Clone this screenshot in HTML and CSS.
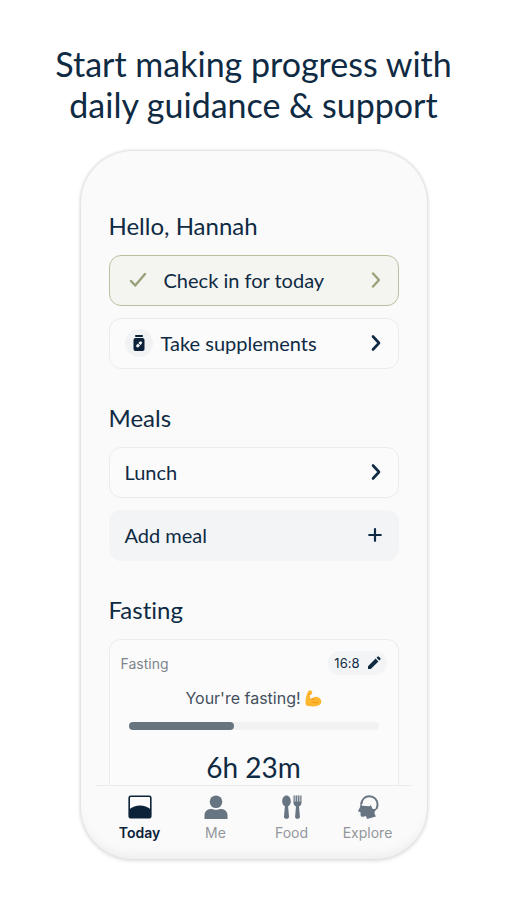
FILE: index.html
```html
<!DOCTYPE html>
<html lang="en">
<head>
<meta charset="utf-8">
<meta name="viewport" content="width=device-width, initial-scale=1">
<title>Today</title>
<link rel="stylesheet" href="styles.css">
</head>
<body>
<main class="page">
  <h1 class="headline">Start making progress with<br>daily guidance &amp; support</h1>
  <div class="phone">
    <div class="content">
      <section class="section">
        <h2>Hello, Hannah</h2>
        <button class="row row-done" type="button">
          <svg class="check" width="20" height="18" viewBox="0 0 20 18" fill="none" stroke="currentColor" stroke-width="2.5" stroke-linecap="round" stroke-linejoin="round"><path d="M3 10l4.200 4.500L17 3"/></svg>
          <span class="label">Check in for today</span>
          <svg width="12" height="18" viewBox="0 0 12 18" fill="none" stroke="currentColor" stroke-width="2.400" stroke-linecap="round" stroke-linejoin="round"><path d="M3 2.500l6 6.500-6 6.500"/></svg>
        </button>
        <button class="row" type="button">
          <span class="badge"><svg width="12" height="18" viewBox="0 0 12 18"><path d="M2.200 1h7.600v2H2.200z" fill="#0b2239"/><rect x="0.500" y="4" width="11" height="13" rx="2" fill="#0b2239"/><g fill="none" stroke="#f3f4f5" stroke-width="3" stroke-linecap="round"><path d="M4.600 12L7.600 8.800"/></g><path d="M4.800 9l2.800 2.800" stroke="#0b2239" stroke-width="1"/></svg></span>
          <span class="label">Take supplements</span>
          <svg width="12" height="18" viewBox="0 0 12 18" fill="none" stroke="currentColor" stroke-width="2.600" stroke-linecap="round" stroke-linejoin="round"><path d="M3 2.500l6 6.500-6 6.500"/></svg>
        </button>
      </section>
      <section class="section">
        <h2>Meals</h2>
        <button class="row" type="button">
          <span class="label">Lunch</span>
          <svg width="12" height="18" viewBox="0 0 12 18" fill="none" stroke="currentColor" stroke-width="2.600" stroke-linecap="round" stroke-linejoin="round"><path d="M3 2.500l6 6.500-6 6.500"/></svg>
        </button>
        <button class="row row-add" type="button">
          <span class="label">Add meal</span>
          <svg width="14" height="14" viewBox="0 0 14 14" fill="none" stroke="currentColor" stroke-width="2.200" stroke-linecap="round"><path d="M7 1.200v11.600M1.200 7h11.600"/></svg>
        </button>
      </section>
      <section class="section">
        <h2>Fasting</h2>
        <div class="card">
          <div class="card-head">
            <span>Fasting</span>
            <button class="plan" type="button">16:8
              <svg width="14" height="14" viewBox="0 0 14 14" fill="currentColor"><path d="M1 10.200L8.600 2.600l2.800 2.800L3.800 13H1zM9.500 1.700l1-1a1 1 0 0 1 1.400 0l1.400 1.400a1 1 0 0 1 0 1.400l-1 1z"/></svg>
            </button>
          </div>
          <p class="message">Your're fasting!
            <svg width="17" height="17" viewBox="0 0 17 17" role="img" aria-label="flexed biceps"><path d="M3.600.8C4.800.2 6.600.4 7.100 1.500c.4 1.100-.1 2.500-1.300 2.800l-1.100.2c0 2 .5 3.400 1.400 4.800 1.500-2 4-2.900 6.100-2.400 2.800.600 4.300 2.900 4.100 5.200-.3 3-3.700 4.300-8 4.300-3.300 0-5.800-.3-7.300-1.300C-.4 11.500 1.200 4.500 3.600.8z" fill="#fdb62f"/><path d="M6 9.300c1-.5 2.200-.4 3 .3M7.600 12c1.500 1 3.500 1 5 .1M4.300 4.700l1.600-.4" fill="none" stroke="#e4890f" stroke-width=".8" stroke-linecap="round"/></svg>
          </p>
          <div class="track" role="progressbar" aria-label="Fasting progress" aria-valuenow="42" aria-valuemin="0" aria-valuemax="100"><div class="fill" style="width:42%"></div></div>
          <p class="time">6h 23m</p>
        </div>
      </section>
    </div>
    <nav class="tabs">
      <a class="tab tab-active" href="#today">
        <svg width="24" height="24" viewBox="0 0 24 24"><rect x="1.200" y="1.200" width="21.600" height="21.600" rx="1.500" fill="none" stroke="currentColor" stroke-width="1.600"/><path d="M1 14.500c3.500-2.500 7-4 11-4s7.500 1.500 11 4V23H1z" fill="currentColor"/></svg>
        Today
      </a>
      <a class="tab" href="#me">
        <svg width="24" height="24" viewBox="0 0 24 24" fill="currentColor"><circle cx="12" cy="6.800" r="6.300"/><path d="M.500 24v-3.500c0-4 2.800-6.500 6.500-6.500 1.700 0 3 .8 5 .8s3.300-.8 5-.8c3.700 0 6.500 2.500 6.500 6.500V24z"/></svg>
        Me
      </a>
      <a class="tab" href="#food">
        <svg width="24" height="24" viewBox="0 0 24 24" fill="currentColor"><path d="M6.500.500c2.500 0 4.300 2.700 4.300 5.800 0 2.300-1 4.200-2.700 5l.9 10.200c.1 1.400-.9 2.300-2.500 2.300S3.900 22.900 4 21.500l.9-10.200c-1.700-.8-2.700-2.700-2.700-5C2.200 3.200 4 .500 6.500.500z"/><path d="M13.500.500h1.200v6h1.100v-6h1.100v6h1.200v-6h1.100v6h1.100v-6h1.200v7.300c0 1.900-1 3.100-2.500 3.600l.9 10.100c.1 1.400-.9 2.300-2.400 2.300s-2.500-.9-2.400-2.300L16 11.400c-1.500-.5-2.500-1.700-2.500-3.600z"/><path d="M14.700.500h5.600v6h-5.600z" opacity=".35"/></svg>
        Food
      </a>
      <a class="tab" href="#explore">
        <svg width="24" height="24" viewBox="0 0 24 24"><path d="M5.500 9C5.800 4.200 8.900 1.300 13.300 1.300c4.900 0 8.200 3.500 8.200 8.200 0 1.600-.5 3.200-1.200 4.500" fill="none" stroke="currentColor" stroke-width="2"/><path d="M4.500 7l1.700 3.800 7.600.5 1-1.300 1.700 3.800c1.500.5 3.200.300 4.800-.8-1.200 2-2.600 3.300-2.800 4.600-.1 1.200.5 2.200 1.400 3.800L11 24l-1-3c-1.500.4-3.700 1.200-4.700.5-1.100-.8-.6-2.800-.9-4.500l-1.600-.3c-.6-.2-.8-.8-.5-1.300l1.900-3.600z" fill="currentColor"/></svg>
        Explore
      </a>
    </nav>
  </div>
</main>
</body>
</html>
```
FILE: styles.css
```css
* {
  box-sizing: border-box;
}

body {
  margin: 0;
  background: #fff;
  color: #0f2a43;
  font-family: Lato, "Liberation Sans", sans-serif;
  font-variant-ligatures: none;
}

h1,
h2,
p {
  margin: 0;
  font-weight: 400;
}

svg {
  flex: none;
}

button {
  font: inherit;
  color: inherit;
  cursor: pointer;
}

.page {
  display: flex;
  flex-direction: column;
  align-items: center;
  padding: 43px 16px 38px;
}

.headline {
  margin-bottom: 26px;
  font-size: 34px;
  line-height: 41px;
  text-align: center;
}

.phone {
  width: 100%;
  max-width: 346px;
  padding: 59px 15px 16px;
  border-radius: 52px;
  background: #fafafa;
  box-shadow: 0 0 3px 1px #dcdcdc, 0 2px 5px 0 #e8e8e8, inset 0 -10px 12px -8px #e9e9e9;
}

.content {
  display: flex;
  flex-direction: column;
  gap: 33px;
  padding: 0 13px;
}

.section {
  display: flex;
  flex-direction: column;
  gap: 12px;
}

h2 {
  margin-bottom: 1px;
  font-size: 24px;
  line-height: 32px;
}

.row {
  display: flex;
  align-items: center;
  gap: 8px;
  width: 100%;
  height: 51px;
  padding: 0 16px 2px 15px;
  border: 1px solid #ececee;
  border-radius: 12px;
  background: #fbfbfb;
  font-size: 20px;
  line-height: 28px;
  text-align: left;
}

.label {
  flex: 1;
}

.row-done {
  gap: 16px;
  padding-left: 18px;
  border-color: #b9c0a0;
  background: #f4f5f1;
}

.row-done svg {
  color: #98a37a;
}

.row-add {
  border-color: #f2f4f6;
  background: #f2f4f6;
}

.badge {
  display: grid;
  place-items: center;
  width: 28px;
  height: 28px;
  border-radius: 50%;
  background: #f1f2f3;
}

.card {
  padding: 11px 11px 0;
  border: 1px solid #ececee;
  border-bottom: 0;
  border-radius: 12px 12px 0 0;
  background: #fbfbfb;
}

.card-head {
  display: flex;
  align-items: center;
  justify-content: space-between;
  color: #7d848c;
  font-family: Inter, "Liberation Sans", sans-serif;
  font-size: 14px;
}

.plan {
  display: flex;
  align-items: center;
  gap: 7px;
  height: 24px;
  padding: 0 6px;
  border: 0;
  border-radius: 12px;
  background: #f3f4f5;
  color: #0f2a43;
  font-size: 13px;
}

.message {
  display: flex;
  align-items: center;
  justify-content: center;
  gap: 4px;
  margin: 13px 0 14px;
  color: #44505d;
  font-family: Inter, "Liberation Sans", sans-serif;
  font-size: 16px;
  line-height: 20px;
}

.track {
  height: 8px;
  margin: 0 8px;
  border-radius: 4px;
  background: #f2f2f3;
}

.fill {
  height: 100%;
  border-radius: 4px;
  background: #667580;
}

.time {
  margin-top: 19px;
  font-size: 28px;
  line-height: 36px;
  text-align: center;
}

.tabs {
  display: flex;
  padding: 9px 6px 0;
  border-top: 1px solid #ececec;
}

.tab {
  display: flex;
  flex: 1;
  flex-direction: column;
  align-items: center;
  gap: 4px;
  color: #93979c;
  font-family: Inter, "Liberation Sans", sans-serif;
  font-size: 14px;
  line-height: 20px;
  text-decoration: none;
}

.tab svg {
  color: #677482;
}

.tab-active,
.tab-active svg {
  color: #0b2239;
}

.tab-active {
  font-weight: 600;
}
```
